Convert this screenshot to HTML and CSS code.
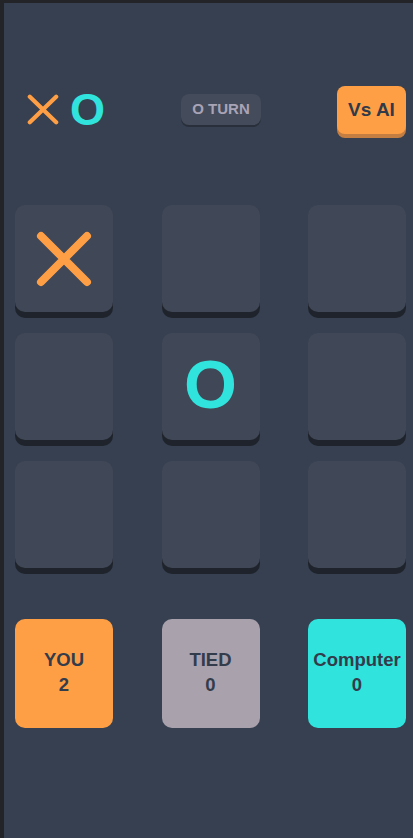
FILE: index.html
```html
<!DOCTYPE html>
<html lang="en">
<head>
<meta charset="utf-8">
<title>Tic Tac Toe</title>
<link rel="stylesheet" href="styles.css">
</head>
<body>
<div class="app">
  <header class="header">
    <div class="logo">
      <svg class="logo-x" width="34" height="33" viewBox="0 0 34 33">
        <path d="M3 3 L31 30 M31 3 L3 30" stroke="#ff9f45" stroke-width="4.5" stroke-linecap="round" fill="none"/>
      </svg>
      <span class="logo-o">O</span>
    </div>
    <div class="turn">O TURN</div>
    <button class="mode">Vs AI</button>
  </header>

  <main class="board">
    <div class="cell">
      <svg width="60" height="60" viewBox="0 0 60 60">
        <path d="M7 7 L53 53 M53 7 L7 53" stroke="#ff9f45" stroke-width="8" stroke-linecap="round" fill="none"/>
      </svg>
    </div>
    <div class="cell"></div>
    <div class="cell"></div>
    <div class="cell"></div>
    <div class="cell"><span class="mark-o">O</span></div>
    <div class="cell"></div>
    <div class="cell"></div>
    <div class="cell"></div>
    <div class="cell"></div>
  </main>

  <section class="scores">
    <div class="score score-you"><span>YOU</span><span>2</span></div>
    <div class="score score-tied"><span>TIED</span><span>0</span></div>
    <div class="score score-cpu"><span>Computer</span><span>0</span></div>
  </section>
</div>
</body>
</html>
```

FILE: styles.css
```css
* { box-sizing: border-box; }

html, body {
  margin: 0;
  padding: 0;
  background: #232427;
  font-family: "Liberation Sans", Arial, sans-serif;
  overflow: hidden;
}

.app {
  margin: 3px 0 0 4px;
  background: #364050;
  min-height: 835px;
  padding-top: 83px;
}

.header {
  display: flex;
  align-items: center;
  justify-content: space-between;
  margin-left: 23px;
  width: 379px;
  height: 48px;
}

.logo {
  display: flex;
  align-items: center;
  gap: 11px;
  width: 78px;
}

.logo-x { display: block; margin-top: -2px; }

.logo-o {
  color: #30e3dc;
  font-weight: 700;
  font-size: 45px;
  line-height: 1;
  margin-top: -2px;
}

.turn {
  width: 80px;
  height: 31px;
  margin-top: -2px;
  border-radius: 8px;
  background: #444b5a;
  box-shadow: 0 2px 0 #2a303b;
  color: #a9a3b6;
  font-size: 15px;
  font-weight: 700;
  display: flex;
  align-items: center;
  justify-content: center;
  padding-bottom: 2px;
}

.mode {
  width: 69px;
  height: 48px;
  border: none;
  border-radius: 8px;
  background: #ff9f45;
  box-shadow: 0 4px 0 #c47e42;
  color: #313a49;
  font-family: "Liberation Sans", Arial, sans-serif;
  font-weight: 700;
  font-size: 19px;
  padding: 0;
}

.board {
  display: grid;
  grid-template-columns: repeat(3, 98px);
  grid-auto-rows: 107px;
  justify-content: space-between;
  row-gap: 21px;
  margin: 71px 0 0 11px;
  width: 391px;
}

.cell {
  background: #404756;
  border-radius: 10px;
  box-shadow: 0 6px 0 #1f242c;
  display: flex;
  align-items: center;
  justify-content: center;
}

.cell svg { display: block; }

.mark-o {
  color: #30e3dc;
  font-weight: 700;
  font-size: 68px;
  line-height: 1;
  margin-top: -6px;
}

.scores {
  display: grid;
  grid-template-columns: repeat(3, 98px);
  justify-content: space-between;
  margin: 51px 0 0 11px;
  width: 391px;
}

.score {
  height: 109px;
  border-radius: 10px;
  display: flex;
  flex-direction: column;
  align-items: center;
  justify-content: center;
  color: #333c4b;
  font-weight: 700;
  font-size: 18.5px;
  line-height: 25px;
  padding-bottom: 4px;
}

.score-you { background: #ff9f45; }
.score-tied { background: #a9a1ac; }
.score-cpu { background: #30e3dc; }
```
